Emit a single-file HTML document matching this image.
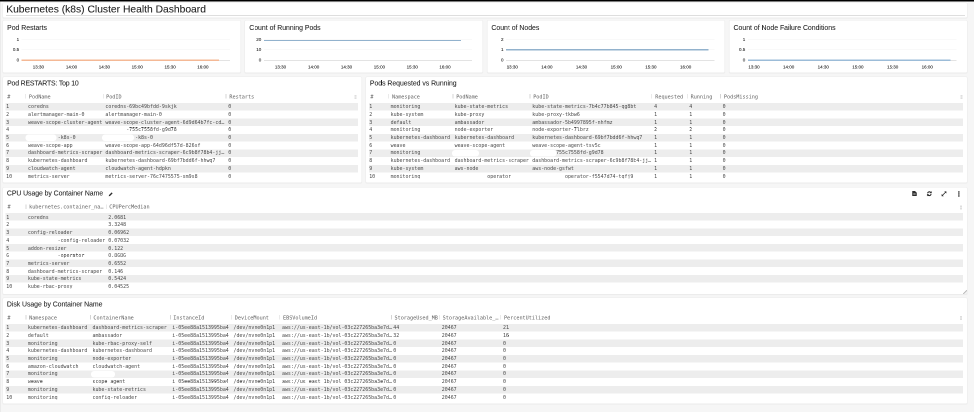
<!DOCTYPE html><html><head><meta charset="utf-8"><title>Kubernetes (k8s) Cluster Health Dashboard</title><style>
html,body{margin:0;padding:0;background:#f6f6f6;}
body{width:974px;height:412px;overflow:hidden;position:relative}
#w{position:absolute;left:0;top:0;width:1948px;height:824px;transform:scale(.5);transform-origin:0 0;background:#f6f6f6;will-change:transform;font-family:"Liberation Sans", Arial, Helvetica, sans-serif;overflow:hidden}
#lstrip{position:absolute;left:0;top:0;width:2.2px;height:824px;background:#ebebeb}
#tband{position:absolute;left:2.2px;top:2px;width:1932.4px;height:5px;background:#fbfbfb}
#bar{position:absolute;left:0;top:0;width:1948px;height:2.6px;background:#000}
.panel{position:absolute;box-sizing:border-box;background:#fff;border:1px solid #ebebeb;border-radius:3px;box-shadow:0 1px 1.5px rgba(0,0,0,.05);overflow:hidden}
.pt{position:absolute;left:8.2px;top:2.4px;font-size:13.8px;line-height:18px;color:#1f1f1f;white-space:nowrap;-webkit-text-stroke:0.12px #1f1f1f}
#ttl{position:absolute;left:6.4px;top:-1.3px;font-size:20.6px;line-height:26px;color:#1e1e1e;white-space:nowrap;-webkit-text-stroke:0.15px #1e1e1e}
#ul{position:absolute;left:6px;right:4px;top:24px;height:2px;background:#dedede}
.yl{position:absolute;left:0;text-align:right;font-size:9.0px;line-height:12px;color:#1a1a1a;-webkit-text-stroke:0.15px #1a1a1a}
.xl{position:absolute;top:86.6px;width:40px;text-align:center;font-size:9.0px;line-height:12px;color:#1a1a1a;-webkit-text-stroke:0.15px #1a1a1a}
.gl{position:absolute;height:1px;background:#f3f3f3}
.ax{position:absolute;height:1.5px;background:#c6c6c6}
.ln{position:absolute;height:2.5px}
.th{position:absolute;font-family:"DejaVu Sans Mono", "Liberation Mono", monospace;font-size:10.3px;line-height:13px;color:#606060;white-space:pre}
.menu{position:absolute;width:3.6px;height:8px;background:linear-gradient(#dedede 0 40%,#ececec 40% 60%,#dedede 60%)}
.sep{position:absolute;width:1.5px;height:9px;background:#d4d4d4}
.tr{position:absolute;height:15.1px;font-family:"DejaVu Sans Mono", "Liberation Mono", monospace;font-size:9.9px;line-height:14.7px;color:#474747;white-space:pre}
.tr.odd{background:#ededed}
.td{position:absolute;top:0;z-index:1}
.mask{position:absolute;height:7px;background:#fff;z-index:2}
.blob{position:absolute;height:13.6px;background:#fff;border-radius:6px;z-index:2}
.ic{position:absolute}
</style></head><body><div id="w"><div id="lstrip"></div><div id="tband"></div><div id="bar"></div><div class="panel" style="left:5px;top:5.4px;width:1929.6px;height:30.2px"><div id="ttl">Kubernetes (k8s) Cluster Health Dashboard</div><div id="ul"></div></div><div class="panel" style="left:5.0px;top:40.2px;width:476.7px;height:105.6px"><div class="pt" style="left:8.2px;top:6.0px;letter-spacing:0px">Pod Restarts</div><div class="yl" style="top:31.4px;width:32.3px">1</div><div class="yl" style="top:51.6px;width:32.3px">0.5</div><div class="yl" style="top:73.2px;width:32.3px">0</div><div class="gl" style="top:37.5px;height:1.0px;left:37.3px;width:416.7px"></div><div class="gl" style="top:57.6px;height:1.0px;left:37.3px;width:416.7px"></div><div class="ax" style="top:79.2px;height:1.1px;left:37.3px;width:416.7px"></div><div class="ln" style="top:76.8px;height:4px;left:37.3px;width:394.4px;background:linear-gradient(to bottom,transparent 0 1px,rgba(239,154,104,.7) 1px 2px,rgb(239,154,104) 2px 3px,rgba(239,154,104,.4) 3px 4px)"></div><div class="xl" style="left:50.8px">13:30</div><div class="xl" style="left:117.0px">14:00</div><div class="xl" style="left:182.8px">14:30</div><div class="xl" style="left:248.4px">15:00</div><div class="xl" style="left:314.2px">15:30</div><div class="xl" style="left:379.8px">16:00</div></div><div class="panel" style="left:489.3px;top:40.2px;width:476.7px;height:105.6px"><div class="pt" style="left:8.2px;top:6.0px;letter-spacing:0px">Count of Running Pods</div><div class="yl" style="top:31.4px;width:32.3px">20</div><div class="yl" style="top:51.6px;width:32.3px">10</div><div class="yl" style="top:73.2px;width:32.3px">0</div><div class="gl" style="top:37.5px;height:1.0px;left:37.3px;width:416.7px"></div><div class="gl" style="top:57.6px;height:1.0px;left:37.3px;width:416.7px"></div><div class="ax" style="top:79.2px;height:1.1px;left:37.3px;width:416.7px"></div><div class="ln" style="top:38.9px;height:2.1px;left:37.3px;width:394.4px;background:#92b2cd"></div><div class="xl" style="left:50.8px">13:30</div><div class="xl" style="left:117.0px">14:00</div><div class="xl" style="left:182.8px">14:30</div><div class="xl" style="left:248.4px">15:00</div><div class="xl" style="left:314.2px">15:30</div><div class="xl" style="left:379.8px">16:00</div></div><div class="panel" style="left:973.6px;top:40.2px;width:476.7px;height:105.6px"><div class="pt" style="left:8.2px;top:6.0px;letter-spacing:0px">Count of Nodes</div><div class="yl" style="top:31.4px;width:32.3px">2</div><div class="yl" style="top:51.6px;width:32.3px">1</div><div class="yl" style="top:73.2px;width:32.3px">0</div><div class="gl" style="top:37.5px;height:1.0px;left:37.3px;width:416.7px"></div><div class="gl" style="top:57.6px;height:1.0px;left:37.3px;width:416.7px"></div><div class="ax" style="top:79.2px;height:1.1px;left:37.3px;width:416.7px"></div><div class="ln" style="top:56.8px;height:2.7px;left:37.3px;width:404.7px;background:#92b2cd"></div><div class="xl" style="left:30.0px">13:30</div><div class="xl" style="left:99.2px">14:00</div><div class="xl" style="left:168.4px">14:30</div><div class="xl" style="left:237.8px">15:00</div><div class="xl" style="left:307.2px">15:30</div><div class="xl" style="left:376.6px">16:00</div></div><div class="panel" style="left:1457.9px;top:40.2px;width:476.7px;height:105.6px"><div class="pt" style="left:8.2px;top:6.0px;letter-spacing:0px">Count of Node Failure Conditions</div><div class="yl" style="top:31.4px;width:31.7px">1</div><div class="yl" style="top:51.6px;width:31.7px">0.5</div><div class="yl" style="top:73.2px;width:31.7px">0</div><div class="gl" style="top:37.5px;height:1.0px;left:36.7px;width:417.3px"></div><div class="gl" style="top:57.6px;height:1.0px;left:36.7px;width:417.3px"></div><div class="ax" style="top:79.2px;height:1.1px;left:36.7px;width:417.3px"></div><div class="ln" style="top:77.8px;height:3.0px;left:36.7px;width:405.0px;background:#9cbcd8"></div><div class="xl" style="left:29.1px">13:30</div><div class="xl" style="left:98.3px">14:00</div><div class="xl" style="left:167.5px">14:30</div><div class="xl" style="left:236.9px">15:00</div><div class="xl" style="left:306.3px">15:30</div><div class="xl" style="left:375.7px">16:00</div></div><div class="panel" style="left:5px;top:153.4px;width:718.8px;height:213.0px"><div class="pt" style="left:8.2px;top:3.8px;letter-spacing:-0.33px">Pod RESTARTS: Top 10</div><div class="th" style="left:8.4px;top:32.56px">#</div><div class="sep" style="left:44.85px;top:34.1px"></div><div class="th" style="left:51.8px;top:32.56px">PodName</div><div class="sep" style="left:199.65px;top:34.1px"></div><div class="th" style="left:206.2px;top:32.56px">PodID</div><div class="sep" style="left:445.45px;top:34.1px"></div><div class="th" style="left:452.8px;top:32.56px">Restarts</div><div class="menu" style="left:703.1999999999999px;top:35.800000000000004px"></div><div class="tr odd" style="left:5.2px;top:52.0px;width:704.6px"><span class="td" style="left:1.0px;top:-0.16px">1</span><span class="td" style="left:44.8px;top:-0.16px">coredns</span><span class="td" style="left:199.6px;top:-0.16px">coredns-69bc49bfdd-9skjk</span><span class="td" style="left:445.2px;top:-0.16px">0</span></div><div class="tr" style="left:5.2px;top:67.45px;width:704.6px"><span class="td" style="left:1.0px;top:0.39px">2</span><span class="td" style="left:44.8px;top:0.39px">alertmanager-main-0</span><span class="td" style="left:199.6px;top:0.39px">alertmanager-main-0</span><span class="td" style="left:445.2px;top:0.39px">0</span></div><div class="tr odd" style="left:5.2px;top:82.9px;width:704.6px"><span class="td" style="left:1.0px;top:0.94px">3</span><span class="td" style="left:44.8px;top:0.94px">weave-scope-cluster-agent</span><span class="td" style="left:199.6px;top:0.94px">weave-scope-cluster-agent-6d9d64b7fc-cd…</span><span class="td" style="left:445.2px;top:0.94px">0</span></div><div class="tr" style="left:5.2px;top:98.35px;width:704.6px"><span class="td" style="left:1.0px;top:-0.51px">4</span><span class="td" style="left:199.6px;top:-0.51px">       -755c7558fd-g9d78</span><span class="td" style="left:445.2px;top:-0.51px">0</span></div><div class="tr odd" style="left:5.2px;top:113.8px;width:704.6px"><span class="td" style="left:1.0px;top:0.04px">5</span><span class="td" style="left:44.8px;top:0.04px">          -k8s-0</span><span class="td" style="left:199.6px;top:0.04px">          -k8s-0</span><span class="td" style="left:445.2px;top:0.04px">0</span></div><div class="tr" style="left:5.2px;top:129.25px;width:704.6px"><span class="td" style="left:1.0px;top:0.59px">6</span><span class="td" style="left:44.8px;top:0.59px">weave-scope-app</span><span class="td" style="left:199.6px;top:0.59px">weave-scope-app-64d96df57d-826sf</span><span class="td" style="left:445.2px;top:0.59px">0</span></div><div class="tr odd" style="left:5.2px;top:144.7px;width:704.6px"><span class="td" style="left:1.0px;top:-0.86px">7</span><span class="td" style="left:44.8px;top:-0.86px">dashboard-metrics-scraper</span><span class="td" style="left:199.6px;top:-0.86px">dashboard-metrics-scraper-6c9b8f78b4-jj…</span><span class="td" style="left:445.2px;top:-0.86px">0</span></div><div class="tr" style="left:5.2px;top:160.15px;width:704.6px"><span class="td" style="left:1.0px;top:-0.31px">8</span><span class="td" style="left:44.8px;top:-0.31px">kubernetes-dashboard</span><span class="td" style="left:199.6px;top:-0.31px">kubernetes-dashboard-69bf7bdd6f-hhwq7</span><span class="td" style="left:445.2px;top:-0.31px">0</span></div><div class="tr odd" style="left:5.2px;top:175.6px;width:704.6px"><span class="td" style="left:1.0px;top:0.24px">9</span><span class="td" style="left:44.8px;top:0.24px">cloudwatch-agent</span><span class="td" style="left:199.6px;top:0.24px">cloudwatch-agent-hdpkn</span><span class="td" style="left:445.2px;top:0.24px">0</span></div><div class="tr" style="left:5.2px;top:191.05px;width:704.6px"><span class="td" style="left:1.0px;top:0.79px">10</span><span class="td" style="left:44.8px;top:0.79px">metrics-server</span><span class="td" style="left:199.6px;top:0.79px">metrics-server-76c7475575-sm9s8</span><span class="td" style="left:445.2px;top:0.79px">0</span></div><div class="mask" style="left:5.2px;top:203.0px;width:704.6px"></div><div class="blob" style="left:45.2px;top:114.3px;width:62px"></div><div class="blob" style="left:197.6px;top:114.3px;width:64px"></div></div><div class="panel" style="left:731.4px;top:153.4px;width:1203.1999999999998px;height:213.0px"><div class="pt" style="left:7.4px;top:3.8px;letter-spacing:-0.06px">Pods Requested vs Running</div><div class="th" style="left:8.4px;top:32.56px">#</div><div class="sep" style="left:44.45px;top:34.1px"></div><div class="th" style="left:51.6px;top:32.56px">Namespace</div><div class="sep" style="left:172.95px;top:34.1px"></div><div class="th" style="left:180.0px;top:32.56px">PodName</div><div class="sep" style="left:326.65px;top:34.1px"></div><div class="th" style="left:334.0px;top:32.56px">PodID</div><div class="sep" style="left:570.55px;top:34.1px"></div><div class="th" style="left:578.1px;top:32.56px">Requested</div><div class="sep" style="left:641.45px;top:34.1px"></div><div class="th" style="left:648.8px;top:32.56px">Running</div><div class="sep" style="left:708.05px;top:34.1px"></div><div class="th" style="left:715.4px;top:32.56px">PodsMissing</div><div class="menu" style="left:1188.8px;top:35.800000000000004px"></div><div class="tr odd" style="left:5.8px;top:52.0px;width:1188.0px"><span class="td" style="left:0.2px;top:-0.16px">1</span><span class="td" style="left:43.0px;top:-0.16px">monitoring</span><span class="td" style="left:171.0px;top:-0.16px">kube-state-metrics</span><span class="td" style="left:326.4px;top:-0.16px">kube-state-metrics-7b4c77b845-qg8bt</span><span class="td" style="left:570.1px;top:-0.16px">4</span><span class="td" style="left:640.2px;top:-0.16px">4</span><span class="td" style="left:707.0px;top:-0.16px">0</span></div><div class="tr" style="left:5.8px;top:67.45px;width:1188.0px"><span class="td" style="left:0.2px;top:0.39px">2</span><span class="td" style="left:43.0px;top:0.39px">kube-system</span><span class="td" style="left:171.0px;top:0.39px">kube-proxy</span><span class="td" style="left:326.4px;top:0.39px">kube-proxy-tkbw6</span><span class="td" style="left:570.1px;top:0.39px">1</span><span class="td" style="left:640.2px;top:0.39px">1</span><span class="td" style="left:707.0px;top:0.39px">0</span></div><div class="tr odd" style="left:5.8px;top:82.9px;width:1188.0px"><span class="td" style="left:0.2px;top:0.94px">3</span><span class="td" style="left:43.0px;top:0.94px">default</span><span class="td" style="left:171.0px;top:0.94px">ambassador</span><span class="td" style="left:326.4px;top:0.94px">ambassador-5b4997895f-nhfmz</span><span class="td" style="left:570.1px;top:0.94px">1</span><span class="td" style="left:640.2px;top:0.94px">1</span><span class="td" style="left:707.0px;top:0.94px">0</span></div><div class="tr" style="left:5.8px;top:98.35px;width:1188.0px"><span class="td" style="left:0.2px;top:-0.51px">4</span><span class="td" style="left:43.0px;top:-0.51px">monitoring</span><span class="td" style="left:171.0px;top:-0.51px">node-exporter</span><span class="td" style="left:326.4px;top:-0.51px">node-exporter-7lbrz</span><span class="td" style="left:570.1px;top:-0.51px">2</span><span class="td" style="left:640.2px;top:-0.51px">2</span><span class="td" style="left:707.0px;top:-0.51px">0</span></div><div class="tr odd" style="left:5.8px;top:113.8px;width:1188.0px"><span class="td" style="left:0.2px;top:0.04px">5</span><span class="td" style="left:43.0px;top:0.04px">kubernetes-dashboard</span><span class="td" style="left:171.0px;top:0.04px">kubernetes-dashboard</span><span class="td" style="left:326.4px;top:0.04px">kubernetes-dashboard-69bf7bdd6f-hhwq7</span><span class="td" style="left:570.1px;top:0.04px">1</span><span class="td" style="left:640.2px;top:0.04px">1</span><span class="td" style="left:707.0px;top:0.04px">0</span></div><div class="tr" style="left:5.8px;top:129.25px;width:1188.0px"><span class="td" style="left:0.2px;top:0.59px">6</span><span class="td" style="left:43.0px;top:0.59px">weave</span><span class="td" style="left:171.0px;top:0.59px">weave-scope-agent</span><span class="td" style="left:326.4px;top:0.59px">weave-scope-agent-tsv5c</span><span class="td" style="left:570.1px;top:0.59px">1</span><span class="td" style="left:640.2px;top:0.59px">1</span><span class="td" style="left:707.0px;top:0.59px">0</span></div><div class="tr odd" style="left:5.8px;top:144.7px;width:1188.0px"><span class="td" style="left:0.2px;top:-0.86px">7</span><span class="td" style="left:43.0px;top:-0.86px">monitoring</span><span class="td" style="left:326.4px;top:-0.86px">        755c7558fd-g9d78</span><span class="td" style="left:570.1px;top:-0.86px">1</span><span class="td" style="left:640.2px;top:-0.86px">1</span><span class="td" style="left:707.0px;top:-0.86px">0</span></div><div class="tr" style="left:5.8px;top:160.15px;width:1188.0px"><span class="td" style="left:0.2px;top:-0.31px">8</span><span class="td" style="left:43.0px;top:-0.31px">kubernetes-dashboard</span><span class="td" style="left:171.0px;top:-0.31px">dashboard-metrics-scraper</span><span class="td" style="left:326.4px;top:-0.31px">dashboard-metrics-scraper-6c9b8f78b4-jj…</span><span class="td" style="left:570.1px;top:-0.31px">1</span><span class="td" style="left:640.2px;top:-0.31px">1</span><span class="td" style="left:707.0px;top:-0.31px">0</span></div><div class="tr odd" style="left:5.8px;top:175.6px;width:1188.0px"><span class="td" style="left:0.2px;top:0.24px">9</span><span class="td" style="left:43.0px;top:0.24px">kube-system</span><span class="td" style="left:171.0px;top:0.24px">aws-node</span><span class="td" style="left:326.4px;top:0.24px">aws-node-gsfwt</span><span class="td" style="left:570.1px;top:0.24px">1</span><span class="td" style="left:640.2px;top:0.24px">1</span><span class="td" style="left:707.0px;top:0.24px">0</span></div><div class="tr" style="left:5.8px;top:191.05px;width:1188.0px"><span class="td" style="left:0.2px;top:0.79px">10</span><span class="td" style="left:43.0px;top:0.79px">monitoring</span><span class="td" style="left:171.0px;top:0.79px">           operator</span><span class="td" style="left:326.4px;top:0.79px">           operator-f5547d74-tqfj9</span><span class="td" style="left:570.1px;top:0.79px">1</span><span class="td" style="left:640.2px;top:0.79px">1</span><span class="td" style="left:707.0px;top:0.79px">0</span></div><div class="mask" style="left:5.8px;top:203.0px;width:1188.0px"></div><div class="blob" style="left:172.0px;top:145.2px;width:54px"></div><div class="blob" style="left:328.0px;top:145.2px;width:53.0px"></div></div><div class="panel" style="left:5px;top:374.2px;width:1929.6px;height:214.8px"><div class="pt" style="left:7.8px;top:3.3px;letter-spacing:-0.12px">CPU Usage by Container Name</div><svg class="ic" style="left:210.6px;top:8.8px" width="9" height="9" viewBox="0 0 12 12"><path d="M0.6 11.4 L1.4 8 L8.4 1 L11 3.6 L4 10.6 Z" fill="#2e2e2e"/></svg><svg class="ic" style="left:1818px;top:6.6px" width="10" height="10" viewBox="0 0 10 10"><path d="M0.5 0h5.5l3.5 3.5v6.5h-9z" fill="#2e2e2e"/><path d="M2.5 5h4.8M2.5 7.3h4.8" stroke="#ddd" stroke-width="0.9"/></svg><svg class="ic" style="left:1847px;top:7.2px" width="11.4" height="10.8" viewBox="0 0 14 14"><path d="M2.4 6A4.8 4.8 0 0 1 10.6 3.6M11.6 8A4.8 4.8 0 0 1 3.4 10.4" fill="none" stroke="#222" stroke-width="2.7"/><path d="M13.2 0.2v5.6H7.6zM0.8 13.8v-5.6h5.6z" fill="#2e2e2e"/></svg><svg class="ic" style="left:1876px;top:6.9px" width="12" height="11.2" viewBox="0 0 14 14"><path d="M3 11L11 3" stroke="#2e2e2e" stroke-width="1.9"/><path d="M7.6 1h5.4v5.4zM6.4 13H1V7.6z" fill="#2e2e2e"/></svg><svg class="ic" style="left:1909.6px;top:7.2px" width="3.8" height="11.8" viewBox="0 0 4 12"><circle cx="2" cy="1.8" r="1.8" fill="#222"/><circle cx="2" cy="6" r="1.8" fill="#222"/><circle cx="2" cy="10.2" r="1.8" fill="#222"/></svg><svg class="ic" style="right:0;bottom:0" width="9" height="9" viewBox="0 0 9 9"><path d="M1.5 9L9 1.5" stroke="#b4b4b4" stroke-width="2"/><path d="M6 9L9 6" stroke="#d0d0d0" stroke-width="1"/></svg><div class="th" style="left:9.0px;top:31.76px">#</div><div class="sep" style="left:45.45px;top:33.7px"></div><div class="th" style="left:52.2px;top:31.76px">kubernetes.container_na…</div><div class="sep" style="left:205.85px;top:33.7px"></div><div class="th" style="left:212.6px;top:31.76px">CPUPercMedian</div><div class="menu" style="left:1914.0px;top:35.400000000000006px"></div><div class="tr odd" style="left:5.2px;top:50.8px;width:1915.0px"><span class="td" style="left:1.4px;top:2.24px">1</span><span class="td" style="left:44.6px;top:2.24px">coredns</span><span class="td" style="left:205.4px;top:2.24px">2.0681</span></div><div class="tr" style="left:5.2px;top:66.25px;width:1915.0px"><span class="td" style="left:1.4px;top:0.79px">2</span><span class="td" style="left:205.4px;top:0.79px">3.3248</span></div><div class="tr odd" style="left:5.2px;top:81.7px;width:1915.0px"><span class="td" style="left:1.4px;top:1.34px">3</span><span class="td" style="left:44.6px;top:1.34px">config-reloader</span><span class="td" style="left:205.4px;top:1.34px">0.06962</span></div><div class="tr" style="left:5.2px;top:97.15px;width:1915.0px"><span class="td" style="left:1.4px;top:1.89px">4</span><span class="td" style="left:44.6px;top:1.89px">          -config-reloader</span><span class="td" style="left:205.4px;top:1.89px">0.07032</span></div><div class="tr odd" style="left:5.2px;top:112.6px;width:1915.0px"><span class="td" style="left:1.4px;top:2.44px">5</span><span class="td" style="left:44.6px;top:2.44px">addon-resizer</span><span class="td" style="left:205.4px;top:2.44px">0.122</span></div><div class="tr" style="left:5.2px;top:128.05px;width:1915.0px"><span class="td" style="left:1.4px;top:0.99px">6</span><span class="td" style="left:44.6px;top:0.99px">          -operator</span><span class="td" style="left:205.4px;top:0.99px">0.8686</span></div><div class="tr odd" style="left:5.2px;top:143.5px;width:1915.0px"><span class="td" style="left:1.4px;top:1.54px">7</span><span class="td" style="left:44.6px;top:1.54px">metrics-server</span><span class="td" style="left:205.4px;top:1.54px">0.6552</span></div><div class="tr" style="left:5.2px;top:158.95px;width:1915.0px"><span class="td" style="left:1.4px;top:2.09px">8</span><span class="td" style="left:44.6px;top:2.09px">dashboard-metrics-scraper</span><span class="td" style="left:205.4px;top:2.09px">0.146</span></div><div class="tr odd" style="left:5.2px;top:174.4px;width:1915.0px"><span class="td" style="left:1.4px;top:0.64px">9</span><span class="td" style="left:44.6px;top:0.64px">kube-state-metrics</span><span class="td" style="left:205.4px;top:0.64px">0.5424</span></div><div class="tr" style="left:5.2px;top:189.85px;width:1915.0px"><span class="td" style="left:1.4px;top:1.19px">10</span><span class="td" style="left:44.6px;top:1.19px">kube-rbac-proxy</span><span class="td" style="left:205.4px;top:1.19px">0.04525</span></div><div class="mask" style="left:5.2px;top:202.2px;width:1915.0px"></div></div><div class="panel" style="left:5px;top:595.4px;width:1929.6px;height:212.6px"><div class="pt" style="left:7.8px;top:3.8px;letter-spacing:-0.08px">Disk Usage by Container Name</div><div class="th" style="left:8.8px;top:32.56px">#</div><div class="sep" style="left:45.45px;top:33.7px"></div><div class="th" style="left:52.2px;top:32.56px">Namespace</div><div class="sep" style="left:174.05px;top:33.7px"></div><div class="th" style="left:180.8px;top:32.56px">ContainerName</div><div class="sep" style="left:334.25px;top:33.7px"></div><div class="th" style="left:340.6px;top:32.56px">InstanceId</div><div class="sep" style="left:455.65px;top:33.7px"></div><div class="th" style="left:463.6px;top:32.56px">DeviceMount</div><div class="sep" style="left:552.65px;top:33.7px"></div><div class="th" style="left:560.0px;top:32.56px">EBSVolumeId</div><div class="sep" style="left:776.25px;top:33.7px"></div><div class="th" style="left:783.0px;top:32.56px">StorageUsed_MB</div><div class="sep" style="left:871.95px;top:33.7px"></div><div class="th" style="left:879.3px;top:32.56px">StorageAvailable_…</div><div class="sep" style="left:994.55px;top:33.7px"></div><div class="th" style="left:1001.9px;top:32.56px">PercentUtilized</div><div class="menu" style="left:1914.0px;top:35.400000000000006px"></div><div class="tr odd" style="left:5.2px;top:52.0px;width:1915.0px"><span class="td" style="left:1.4px;top:-0.16px">1</span><span class="td" style="left:44.6px;top:-0.16px">kubernetes-dashboard</span><span class="td" style="left:173.8px;top:-0.16px">dashboard-metrics-scraper</span><span class="td" style="left:333.4px;top:-0.16px">i-05ee88a1513995ba4</span><span class="td" style="left:455.8px;top:-0.16px">/dev/nvme0n1p1</span><span class="td" style="left:552.8px;top:-0.16px">aws://us-east-1b/vol-03c227265ba3e7d…</span><span class="td" style="left:775.4px;top:-0.16px">44</span><span class="td" style="left:872.4px;top:-0.16px">20467</span><span class="td" style="left:994.7px;top:-0.16px">21</span></div><div class="tr" style="left:5.2px;top:67.45px;width:1915.0px"><span class="td" style="left:1.4px;top:0.39px">2</span><span class="td" style="left:44.6px;top:0.39px">default</span><span class="td" style="left:173.8px;top:0.39px">ambassador</span><span class="td" style="left:333.4px;top:0.39px">i-05ee88a1513995ba4</span><span class="td" style="left:455.8px;top:0.39px">/dev/nvme0n1p1</span><span class="td" style="left:552.8px;top:0.39px">aws://us-east-1b/vol-03c227265ba3e7d…</span><span class="td" style="left:775.4px;top:0.39px">32</span><span class="td" style="left:872.4px;top:0.39px">20467</span><span class="td" style="left:994.7px;top:0.39px">16</span></div><div class="tr odd" style="left:5.2px;top:82.9px;width:1915.0px"><span class="td" style="left:1.4px;top:0.94px">3</span><span class="td" style="left:44.6px;top:0.94px">monitoring</span><span class="td" style="left:173.8px;top:0.94px">kube-rbac-proxy-self</span><span class="td" style="left:333.4px;top:0.94px">i-05ee88a1513995ba4</span><span class="td" style="left:455.8px;top:0.94px">/dev/nvme0n1p1</span><span class="td" style="left:552.8px;top:0.94px">aws://us-east-1b/vol-03c227265ba3e7d…</span><span class="td" style="left:775.4px;top:0.94px">0</span><span class="td" style="left:872.4px;top:0.94px">20467</span><span class="td" style="left:994.7px;top:0.94px">0</span></div><div class="tr" style="left:5.2px;top:98.35px;width:1915.0px"><span class="td" style="left:1.4px;top:-0.51px">4</span><span class="td" style="left:44.6px;top:-0.51px">kubernetes-dashboard</span><span class="td" style="left:173.8px;top:-0.51px">kubernetes-dashboard</span><span class="td" style="left:333.4px;top:-0.51px">i-05ee88a1513995ba4</span><span class="td" style="left:455.8px;top:-0.51px">/dev/nvme0n1p1</span><span class="td" style="left:552.8px;top:-0.51px">aws://us-east-1b/vol-03c227265ba3e7d…</span><span class="td" style="left:775.4px;top:-0.51px">0</span><span class="td" style="left:872.4px;top:-0.51px">20467</span><span class="td" style="left:994.7px;top:-0.51px">0</span></div><div class="tr odd" style="left:5.2px;top:113.8px;width:1915.0px"><span class="td" style="left:1.4px;top:0.04px">5</span><span class="td" style="left:44.6px;top:0.04px">monitoring</span><span class="td" style="left:173.8px;top:0.04px">node-exporter</span><span class="td" style="left:333.4px;top:0.04px">i-05ee88a1513995ba4</span><span class="td" style="left:455.8px;top:0.04px">/dev/nvme0n1p1</span><span class="td" style="left:552.8px;top:0.04px">aws://us-east-1b/vol-03c227265ba3e7d…</span><span class="td" style="left:775.4px;top:0.04px">0</span><span class="td" style="left:872.4px;top:0.04px">20467</span><span class="td" style="left:994.7px;top:0.04px">0</span></div><div class="tr" style="left:5.2px;top:129.25px;width:1915.0px"><span class="td" style="left:1.4px;top:0.59px">6</span><span class="td" style="left:44.6px;top:0.59px">amazon-cloudwatch</span><span class="td" style="left:173.8px;top:0.59px">cloudwatch-agent</span><span class="td" style="left:333.4px;top:0.59px">i-05ee88a1513995ba4</span><span class="td" style="left:455.8px;top:0.59px">/dev/nvme0n1p1</span><span class="td" style="left:552.8px;top:0.59px">aws://us-east-1b/vol-03c227265ba3e7d…</span><span class="td" style="left:775.4px;top:0.59px">0</span><span class="td" style="left:872.4px;top:0.59px">20467</span><span class="td" style="left:994.7px;top:0.59px">0</span></div><div class="tr odd" style="left:5.2px;top:144.7px;width:1915.0px"><span class="td" style="left:1.4px;top:-0.86px">7</span><span class="td" style="left:44.6px;top:-0.86px">monitoring</span><span class="td" style="left:333.4px;top:-0.86px">i-05ee88a1513995ba4</span><span class="td" style="left:455.8px;top:-0.86px">/dev/nvme0n1p1</span><span class="td" style="left:552.8px;top:-0.86px">aws://us-east-1b/vol-03c227265ba3e7d…</span><span class="td" style="left:775.4px;top:-0.86px">0</span><span class="td" style="left:872.4px;top:-0.86px">20467</span><span class="td" style="left:994.7px;top:-0.86px">0</span></div><div class="tr" style="left:5.2px;top:160.15px;width:1915.0px"><span class="td" style="left:1.4px;top:-0.31px">8</span><span class="td" style="left:44.6px;top:-0.31px">weave</span><span class="td" style="left:173.8px;top:-0.31px">scope-agent</span><span class="td" style="left:333.4px;top:-0.31px">i-05ee88a1513995ba4</span><span class="td" style="left:455.8px;top:-0.31px">/dev/nvme0n1p1</span><span class="td" style="left:552.8px;top:-0.31px">aws://us-east-1b/vol-03c227265ba3e7d…</span><span class="td" style="left:775.4px;top:-0.31px">0</span><span class="td" style="left:872.4px;top:-0.31px">20467</span><span class="td" style="left:994.7px;top:-0.31px">0</span></div><div class="tr odd" style="left:5.2px;top:175.6px;width:1915.0px"><span class="td" style="left:1.4px;top:0.24px">9</span><span class="td" style="left:44.6px;top:0.24px">monitoring</span><span class="td" style="left:173.8px;top:0.24px">kube-state-metrics</span><span class="td" style="left:333.4px;top:0.24px">i-05ee88a1513995ba4</span><span class="td" style="left:455.8px;top:0.24px">/dev/nvme0n1p1</span><span class="td" style="left:552.8px;top:0.24px">aws://us-east-1b/vol-03c227265ba3e7d…</span><span class="td" style="left:775.4px;top:0.24px">0</span><span class="td" style="left:872.4px;top:0.24px">20467</span><span class="td" style="left:994.7px;top:0.24px">0</span></div><div class="tr" style="left:5.2px;top:191.05px;width:1915.0px"><span class="td" style="left:1.4px;top:0.79px">10</span><span class="td" style="left:44.6px;top:0.79px">monitoring</span><span class="td" style="left:173.8px;top:0.79px">config-reloader</span><span class="td" style="left:333.4px;top:0.79px">i-05ee88a1513995ba4</span><span class="td" style="left:455.8px;top:0.79px">/dev/nvme0n1p1</span><span class="td" style="left:552.8px;top:0.79px">aws://us-east-1b/vol-03c227265ba3e7d…</span><span class="td" style="left:775.4px;top:0.79px">0</span><span class="td" style="left:872.4px;top:0.79px">20467</span><span class="td" style="left:994.7px;top:0.79px">0</span></div><div class="mask" style="left:5.2px;top:203.0px;width:1915.0px"></div><div class="blob" style="left:176.0px;top:145.2px;width:48px"></div></div></div></body></html>
